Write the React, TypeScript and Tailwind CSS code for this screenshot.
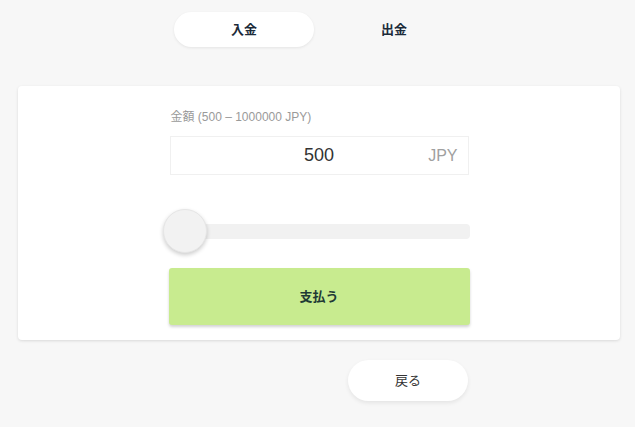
export default function App() {
  const font = { fontFamily: '"Liberation Sans", "Noto Sans CJK JP", sans-serif' };

  return (
    <div className="min-h-[427px] w-full bg-[#f7f7f7] pt-[12px]" style={font}>
      {/* Tabs */}
      <div className="flex justify-center gap-[10px] pl-[3px]">
        <button className="h-[35px] w-[140px] rounded-full bg-white text-[13px] font-bold text-[#1c2b3a] shadow-[0_1px_3px_rgba(0,0,0,0.08)]">
          入金
        </button>
        <button className="h-[35px] w-[140px] rounded-full text-[13px] font-bold text-[#1c2b3a]">
          出金
        </button>
      </div>

      {/* Card */}
      <div className="ml-[18px] mr-[15px] mt-[39px] rounded-[4px] bg-white pb-[15px] pt-[24px] shadow-[0_1px_3px_rgba(0,0,0,0.12)]">
        <div className="mx-auto w-[301px]">
          <div className="pl-[2px] text-[12px] leading-[14px] text-[#9a9a9a]">金額 (500 – 1000000 JPY)</div>

          <div className="relative mx-[1px] mt-[12px] flex h-[39px] items-center justify-center border border-[#f0f0f0]">
            <span className="text-[18px] text-[#333]">500</span>
            <span className="absolute right-[10px] text-[16px] text-[#a0a0a0]">JPY</span>
          </div>

          {/* Slider */}
          <div className="relative mt-[34px] flex h-[44px] items-center">
            <div className="h-[15px] w-full rounded-[4px] bg-[#f1f1f1]" />
            <div className="absolute left-[-6px] top-0 h-[44px] w-[44px] rounded-full border border-[#e6e6e6] bg-[#f2f2f2] shadow-[0_2px_4px_rgba(0,0,0,0.2)]" />
          </div>

          <button className="mt-[15px] flex h-[57px] w-full items-center justify-center rounded-[3px] bg-[#c8eb8f] text-[13px] font-bold text-[#1f3a35] shadow-[0_2px_3px_rgba(0,0,0,0.18)]">
            支払う
          </button>
        </div>
      </div>

      {/* Back */}
      <div className="mx-auto mt-[20px] flex w-[301px] justify-end pl-[3px]">
        <button className="h-[41px] w-[120px] rounded-full bg-white text-[13px] text-[#333] shadow-[0_2px_4px_rgba(0,0,0,0.08)]">
          戻る
        </button>
      </div>
    </div>
  );
}
